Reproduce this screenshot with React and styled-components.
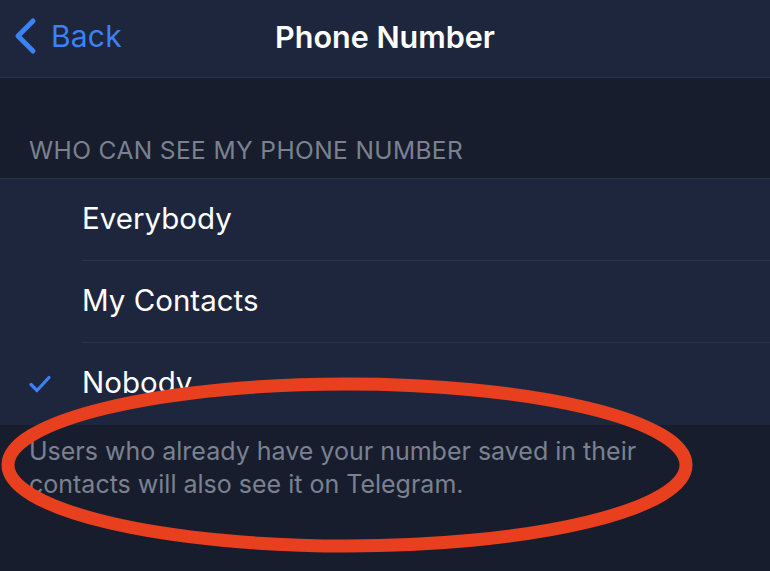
import React from 'react'
import styled, { createGlobalStyle } from 'styled-components'

const GlobalStyle = createGlobalStyle`
  html, body {
    margin: 0;
    padding: 0;
    background: #171d2c;
  }
  body {
    font-family: Inter, "Open Sans", "Liberation Sans", sans-serif;
  }
`

const Screen = styled.div`
  position: relative;
  width: 770px;
  height: 571px;
  overflow: hidden;
  background: #171d2c;
`

const NavBar = styled.div`
  display: grid;
  grid-template-columns: 1fr auto 1fr;
  align-items: center;
  height: 78px;
  padding-bottom: 5px;
  box-sizing: border-box;
  background: #1e263d;
  border-bottom: 1px solid #2a3249;
`

const BackButton = styled.div`
  display: flex;
  align-items: center;
  gap: 12px;
  padding-left: 13px;
  color: #3b82f6;
  font-size: 30px;
  letter-spacing: 0.2px;
`

const Title = styled.div`
  color: #ffffff;
  font-size: 30.5px;
  font-weight: 600;
`

const SectionHeader = styled.div`
  padding: 57px 0 0 29px;
  height: 43px;
  color: #7b8191;
  font-size: 24.5px;
  letter-spacing: 0.4px;
`

const List = styled.div`
  background: #1e263d;
  border-top: 1px solid #2a3249;
`

const Row = styled.div`
  display: flex;
  align-items: center;
  height: 82px;
`

const CheckSlot = styled.div`
  width: 82px;
  display: flex;
  justify-content: center;
  padding-right: 2px;
  box-sizing: border-box;
`

const RowLabel = styled.div`
  flex: 1;
  height: 100%;
  display: flex;
  align-items: center;
  padding-bottom: 4px;
  color: #ffffff;
  font-size: 29.5px;
  border-bottom: ${p => (p.last ? 'none' : '1px solid #2a3249')};
  box-sizing: border-box;
`

const Footer = styled.div`
  max-width: 680px;
  padding: 10px 0 0 29px;
  color: #7b8191;
  font-size: 25px;
  line-height: 33px;
`

const Highlight = styled.svg`
  position: absolute;
  left: 0;
  top: 0;
  pointer-events: none;
`

const options = ['Everybody', 'My Contacts', 'Nobody']

const App = () => (
  <Screen>
    <GlobalStyle />
    <NavBar>
      <BackButton>
        <svg width="26" height="40" viewBox="0 0 26 40">
          <path d="M20 5 L5 20 L20 35" fill="none" stroke="#3b82f6" strokeWidth="5" strokeLinecap="round" strokeLinejoin="round" />
        </svg>
        Back
      </BackButton>
      <Title>Phone Number</Title>
      <div />
    </NavBar>
    <SectionHeader>WHO CAN SEE MY PHONE NUMBER</SectionHeader>
    <List>
      {options.map((o, i) => (
        <Row key={o}>
          <CheckSlot>
            {o === 'Nobody' && (
              <svg width="24" height="20" viewBox="0 0 24 20">
                <path d="M3 10.5 L9 16.5 L21 3.5" fill="none" stroke="#3b82f6" strokeWidth="3.2" strokeLinecap="round" strokeLinejoin="round" />
              </svg>
            )}
          </CheckSlot>
          <RowLabel last={i === options.length - 1}>{o}</RowLabel>
        </Row>
      ))}
    </List>
    <Footer>
      Users who already have your number saved in their contacts will also see it on Telegram.
    </Footer>
    <Highlight width="770" height="571" viewBox="0 0 770 571">
      <ellipse cx="347" cy="465" rx="339" ry="81" fill="none" stroke="#e8401f" strokeWidth="13" />
    </Highlight>
  </Screen>
)

export default App
